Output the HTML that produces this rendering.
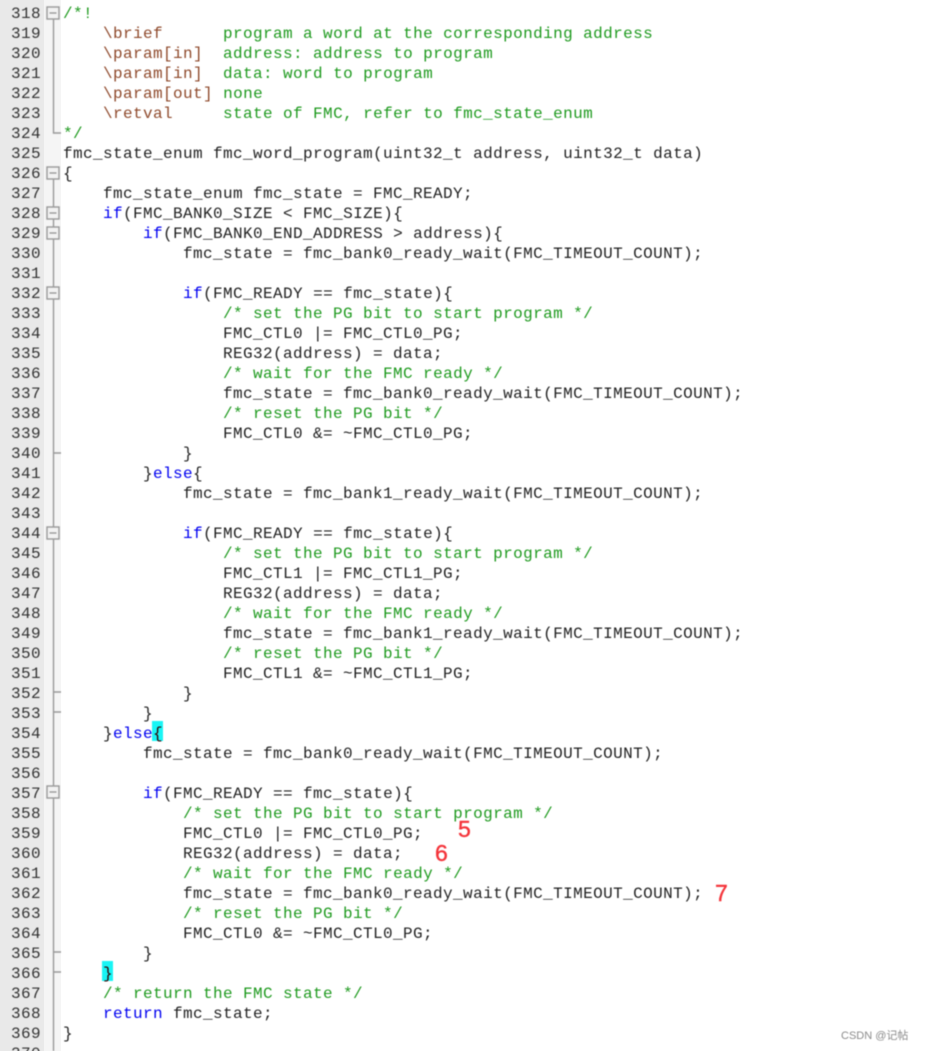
<!DOCTYPE html>
<html><head><meta charset="utf-8">
<style>
html,body{margin:0;padding:0;background:#fff}
#r{position:relative;width:928px;height:1051px;overflow:hidden;background:#fff}
#g{position:absolute;left:0;top:0;width:44px;height:1051px;background:#e9e9e9}
#f{position:absolute;left:44px;top:0;width:17px;height:1051px;background:#f5f5f5}
#w{position:absolute;left:0;top:0;width:928px;height:1051px;filter:blur(.45px)}
pre{margin:0;position:absolute;font:16px/20px "Liberation Mono",monospace;letter-spacing:.4px;color:#222;white-space:pre}
#n{left:11px;top:4px;color:#333}
#c{left:63px;top:4px}
.k{color:#0000f0}.c{color:#1f9a1f}.d{color:#8f4a2c}
.h{color:#300}
.b{position:absolute;width:11px;height:20px;background:#19f5f5}
.num{position:absolute;font-family:"Liberation Sans",sans-serif;font-size:23px;line-height:24px;color:#f4343a;-webkit-text-stroke:.4px #f4343a}
#m{position:absolute;left:841px;top:1029px;font:11px/14px "Liberation Sans","Noto Sans CJK SC",sans-serif;color:#8a8a8a}
</style></head><body><div id="r">
<div id="g"></div><div id="f"></div>
<div id="w">
<svg width="70" height="1051" style="position:absolute;left:0;top:0" fill="#f2f2f2" stroke="#999" stroke-width="1.4">
<path d="M53.5 19V133H61M53.5 173V1051" fill="none"/>
<path d="M53.5 453H61M53.5 692H61M53.5 712H61M53.5 952H61M53.5 972H61" fill="none"/>
<g>
<rect x="47" y="7" width="12" height="12"/><path d="M49.5 13H56.5"/>
<rect x="47" y="167" width="12" height="12"/><path d="M49.5 173H56.5"/>
<rect x="47" y="207" width="12" height="12"/><path d="M49.5 213H56.5"/>
<rect x="47" y="227" width="12" height="12"/><path d="M49.5 233H56.5"/>
<rect x="47" y="287" width="12" height="12"/><path d="M49.5 293H56.5"/>
<rect x="47" y="527" width="12" height="12"/><path d="M49.5 533H56.5"/>
<rect x="47" y="786" width="12" height="12"/><path d="M49.5 792H56.5"/>
</g>
</svg>
<div class="b" style="left:152px;top:721px"></div>
<div class="b" style="left:102px;top:961px"></div>
<pre id="n">318
319
320
321
322
323
324
325
326
327
328
329
330
331
332
333
334
335
336
337
338
339
340
341
342
343
344
345
346
347
348
349
350
351
352
353
354
355
356
357
358
359
360
361
362
363
364
365
366
367
368
369
370</pre>
<pre id="c"><span class="c">/*!</span>
    <span class="d">\brief</span>      <span class="c">program a word at the corresponding address</span>
    <span class="d">\param[in]</span>  <span class="c">address: address to program</span>
    <span class="d">\param[in]</span>  <span class="c">data: word to program</span>
    <span class="d">\param[out]</span> <span class="c">none</span>
    <span class="d">\retval</span>     <span class="c">state of FMC, refer to fmc_state_enum</span>
<span class="c">*/</span>
fmc_state_enum fmc_word_program(uint32_t address, uint32_t data)
{
    fmc_state_enum fmc_state = FMC_READY;
    <span class="k">if</span>(FMC_BANK0_SIZE &lt; FMC_SIZE){
        <span class="k">if</span>(FMC_BANK0_END_ADDRESS &gt; address){
            fmc_state = fmc_bank0_ready_wait(FMC_TIMEOUT_COUNT);

            <span class="k">if</span>(FMC_READY == fmc_state){
                <span class="c">/* set the PG bit to start program */</span>
                FMC_CTL0 |= FMC_CTL0_PG;
                REG32(address) = data;
                <span class="c">/* wait for the FMC ready */</span>
                fmc_state = fmc_bank0_ready_wait(FMC_TIMEOUT_COUNT);
                <span class="c">/* reset the PG bit */</span>
                FMC_CTL0 &amp;= ~FMC_CTL0_PG;
            }
        }<span class="k">else</span>{
            fmc_state = fmc_bank1_ready_wait(FMC_TIMEOUT_COUNT);

            <span class="k">if</span>(FMC_READY == fmc_state){
                <span class="c">/* set the PG bit to start program */</span>
                FMC_CTL1 |= FMC_CTL1_PG;
                REG32(address) = data;
                <span class="c">/* wait for the FMC ready */</span>
                fmc_state = fmc_bank1_ready_wait(FMC_TIMEOUT_COUNT);
                <span class="c">/* reset the PG bit */</span>
                FMC_CTL1 &amp;= ~FMC_CTL1_PG;
            }
        }
    }<span class="k">else</span><span class="h">{</span>
        fmc_state = fmc_bank0_ready_wait(FMC_TIMEOUT_COUNT);

        <span class="k">if</span>(FMC_READY == fmc_state){
            <span class="c">/* set the PG bit to start program */</span>
            FMC_CTL0 |= FMC_CTL0_PG;
            REG32(address) = data;
            <span class="c">/* wait for the FMC ready */</span>
            fmc_state = fmc_bank0_ready_wait(FMC_TIMEOUT_COUNT);
            <span class="c">/* reset the PG bit */</span>
            FMC_CTL0 &amp;= ~FMC_CTL0_PG;
        }
    <span class="h">}</span>
    <span class="c">/* return the FMC state */</span>
    <span class="k">return</span> fmc_state;
}</pre>
<div class="num" style="left:458px;top:817px">5</div>
<div class="num" style="left:435px;top:841px">6</div>
<div class="num" style="left:715px;top:881px">7</div>
<div id="m">CSDN @记帖</div>
</div>
</div></body></html>
